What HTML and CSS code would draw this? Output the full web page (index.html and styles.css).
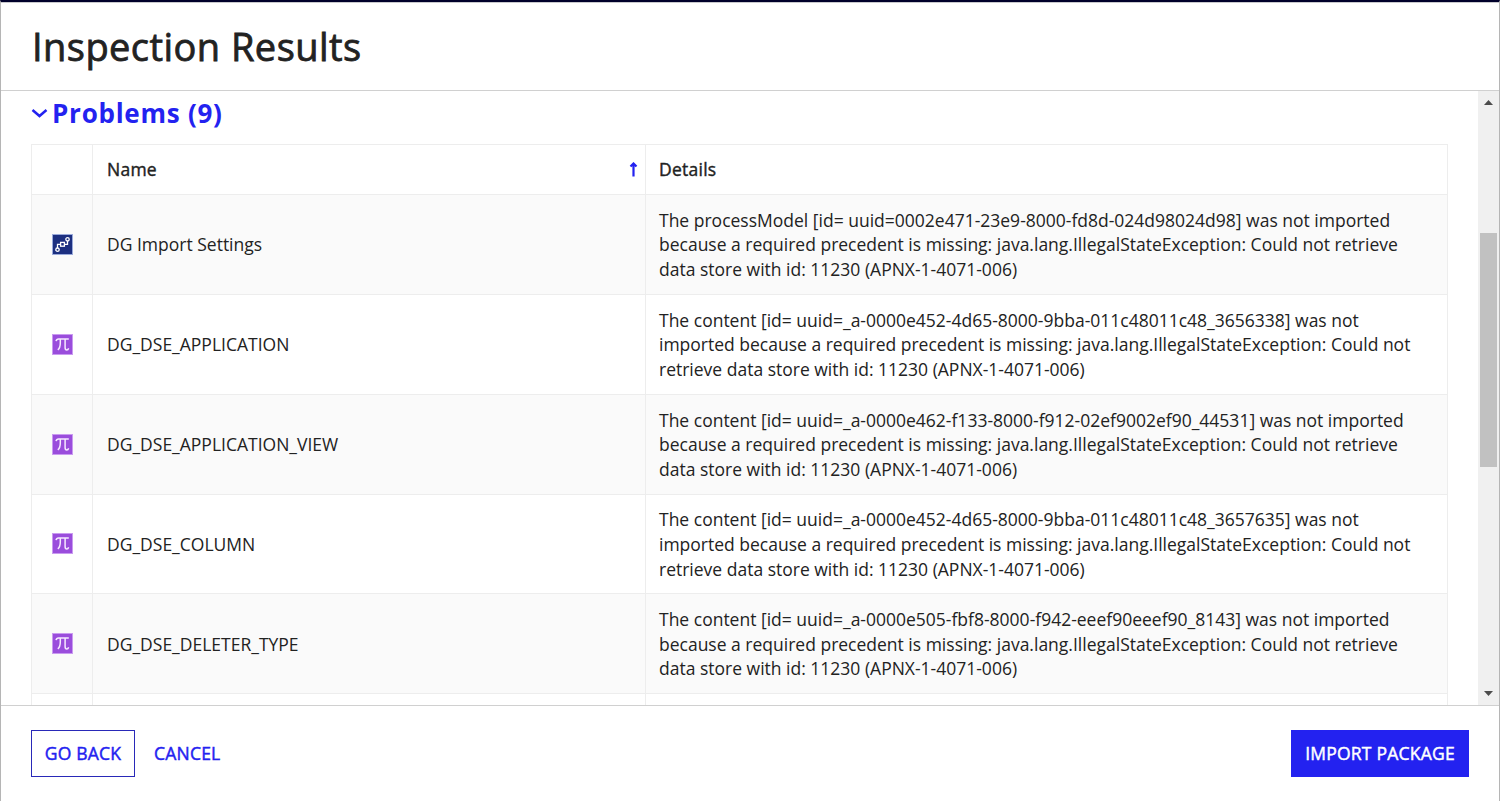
FILE: index.html
```html
<!DOCTYPE html>
<html lang="en">
<head>
    <meta charset="UTF-8">
    <meta name="viewport" content="width=device-width, initial-scale=1.0">
    <title>Inspection Results</title>
    <link rel="stylesheet" href="styles.css">
</head>
<body>

    <svg class="sprite" width="0" height="0">
        <symbol id="icon-rule" viewBox="0 0 21 21">
            <rect x="0.5" y="0.5" width="20" height="20" fill="#9a4ddc" stroke="#c99af0"/>
            <path d="M4 7.2C4.3 5.5 5 4.9 6.6 4.9H16.8M8.3 5V9C8.3 12.500 7.600 14.500 5.800 15.900M13.100 5V13.500C13.100 15.400 13.800 16 14.800 16C15.800 16 16.300 15.400 16.600 14.200" fill="none" stroke="#f6e9ff" stroke-width="1.5"/>
        </symbol>
        <symbol id="icon-process" viewBox="0 0 21 21">
            <rect x="0.5" y="0.5" width="20" height="20" fill="#1c2f80" stroke="#9aaada"/>
            <g fill="none" stroke="#fff" stroke-width="1.3">
                <circle cx="5.500" cy="15.700" r="1.700"/>
                <circle cx="15.500" cy="5.300" r="1.700"/>
                <rect x="8.600" y="8.400" width="3.800" height="3.800"/>
                <path d="M5.500 14V10.300H8.600M12.400 10.300H15.500V7"/>
            </g>
        </symbol>
    </svg>

    <div class="dialog">
        <header class="dialog-header">
            <h1>Inspection Results</h1>
        </header>

        <div class="dialog-body">
            <main class="content">
                <h2>
                    <svg class="chevron" width="17" height="10" viewBox="0 0 17 10"><path d="M1.500 2L8.500 8L15.500 2" fill="none" stroke="#2322f0" stroke-width="2.500"/></svg>
                    <span>Problems (9)</span>
                </h2>
                <table>
                    <colgroup>
                        <col class="col-icon">
                        <col class="col-name">
                        <col class="col-details">
                    </colgroup>
                    <thead>
                        <tr>
                            <th></th>
                            <th>
                                <div class="sorted">Name
                                    <svg width="9" height="16" viewBox="0 0 9 16"><path d="M4.500 14.500V2M1.500 4.500L4.500 1.500L7.500 4.500" fill="none" stroke="#2322f0" stroke-width="2.200"/></svg>
                                </div>
                            </th>
                            <th>Details</th>
                        </tr>
                    </thead>
                    <tbody>
                        <tr>
                            <td class="icon"><svg width="21" height="21"><use href="#icon-process"/></svg></td>
                            <td>DG Import Settings</td>
                            <td>The processModel [id= uuid=0002e471-23e9-8000-fd8d-024d98024d98] was not imported<br>because a required precedent is missing: java.lang.IllegalStateException: Could not retrieve<br>data store with id: 11230 (APNX-1-4071-006)</td>
                        </tr>
                        <tr>
                            <td class="icon"><svg width="21" height="21"><use href="#icon-rule"/></svg></td>
                            <td>DG_DSE_APPLICATION</td>
                            <td>The content [id= uuid=_a-0000e452-4d65-8000-9bba-011c48011c48_3656338] was not<br>imported because a required precedent is missing: java.lang.IllegalStateException: Could not<br>retrieve data store with id: 11230 (APNX-1-4071-006)</td>
                        </tr>
                        <tr>
                            <td class="icon"><svg width="21" height="21"><use href="#icon-rule"/></svg></td>
                            <td>DG_DSE_APPLICATION_VIEW</td>
                            <td>The content [id= uuid=_a-0000e462-f133-8000-f912-02ef9002ef90_44531] was not imported<br>because a required precedent is missing: java.lang.IllegalStateException: Could not retrieve<br>data store with id: 11230 (APNX-1-4071-006)</td>
                        </tr>
                        <tr>
                            <td class="icon"><svg width="21" height="21"><use href="#icon-rule"/></svg></td>
                            <td>DG_DSE_COLUMN</td>
                            <td>The content [id= uuid=_a-0000e452-4d65-8000-9bba-011c48011c48_3657635] was not<br>imported because a required precedent is missing: java.lang.IllegalStateException: Could not<br>retrieve data store with id: 11230 (APNX-1-4071-006)</td>
                        </tr>
                        <tr>
                            <td class="icon"><svg width="21" height="21"><use href="#icon-rule"/></svg></td>
                            <td>DG_DSE_DELETER_TYPE</td>
                            <td>The content [id= uuid=_a-0000e505-fbf8-8000-f942-eeef90eeef90_8143] was not imported<br>because a required precedent is missing: java.lang.IllegalStateException: Could not retrieve<br>data store with id: 11230 (APNX-1-4071-006)</td>
                        </tr>
                        <tr>
                            <td></td>
                            <td></td>
                            <td></td>
                        </tr>
                    </tbody>
                </table>
            </main>
            <div class="scrollbar">
                <svg width="9" height="5" viewBox="0 0 9 5"><path d="M0 5L4.500 0L9 5Z" fill="#4c4c4c"/></svg>
                <div class="thumb"></div>
                <svg width="9" height="5" viewBox="0 0 9 5"><path d="M0 0L4.500 5L9 0Z" fill="#4c4c4c"/></svg>
            </div>
        </div>

        <footer class="dialog-footer">
            <button class="outline">GO BACK</button>
            <button class="link">CANCEL</button>
            <button class="primary">IMPORT PACKAGE</button>
        </footer>
    </div>

</body>
</html>
```
FILE: styles.css
```css
* {
    box-sizing: border-box;
}
body {
    margin: 0;
    font-family: "Open Sans", sans-serif;
    font-size: 17.5px;
    color: #222;
    background-color: #fff;
}
.sprite {
    display: none;
}
.dialog {
    display: flex;
    flex-direction: column;
    height: 801px;
    border-top: 2px solid #00002b;
    border-left: 1px solid #b5b5b5;
    border-right: 1px solid #b5b5b5;
    overflow: hidden;
}
.dialog-header {
    display: flex;
    align-items: center;
    height: 89px;
    padding: 0 31px 2px;
    border-top: 1px solid #c9c9cd;
    border-bottom: 1px solid #d0d0d0;
}
/* medium weight: regular glyphs thickened with a thin stroke */
h1 {
    margin: 0;
    font-size: 38px;
    font-weight: 400;
    letter-spacing: 0.45px;
    line-height: 52px;
    -webkit-text-stroke: 0.8px #222;
}
.dialog-body {
    display: flex;
    height: 614px;
    overflow: hidden;
}
.content {
    flex: 1;
    padding: 0 30px;
}
h2 {
    display: flex;
    align-items: center;
    gap: 4px;
    height: 44px;
    margin: 0 0 9px;
    color: #2322f0;
    font-size: 26px;
    font-weight: 700;
    letter-spacing: 0.75px;
}
table {
    width: 1417px;
    table-layout: fixed;
    border-collapse: separate;
    border-spacing: 0;
    border-top: 1px solid #ededed;
    border-left: 1px solid #ededed;
}
.col-icon {
    width: 61px;
}
.col-name {
    width: 553px;
}
th,
td {
    padding: 0 13px;
    border-right: 1px solid #ededed;
    border-bottom: 1px solid #ededed;
    text-align: left;
    white-space: nowrap;
    line-height: 24.6px;
}
th {
    height: 50px;
    font-weight: 400;
    letter-spacing: 0.25px;
    -webkit-text-stroke: 0.4px #222;
}
td {
    height: 99.85px;
    padding-top: 0.6px;
}
th:nth-child(2),
td:nth-child(2) {
    padding-left: 14px;
}
tbody tr:nth-child(odd) {
    background-color: #fafafa;
}
td.icon {
    padding: 0 20px;
}
.icon svg {
    display: block;
}
.sorted {
    display: flex;
    justify-content: space-between;
    align-items: center;
    margin-right: -6px;
}
.scrollbar {
    display: flex;
    flex-direction: column;
    align-items: center;
    width: 21px;
    padding: 9px 1px 9px 0;
    background-color: #f0f0f0;
}
.thumb {
    width: 17px;
    height: 234px;
    margin: 128px 0 auto;
    background-color: #c1c1c1;
}
.dialog-footer {
    display: flex;
    align-items: center;
    height: 96px;
    padding: 0 30px;
    border-top: 1px solid #d0d0d0;
}
button {
    height: 47px;
    padding: 0 0 2px;
    border: none;
    background: none;
    font-family: inherit;
    font-size: 17.5px;
    font-weight: 400;
    letter-spacing: 0.22px;
    color: #2322f0;
    -webkit-text-stroke: 0.45px currentColor;
    cursor: pointer;
}
button.outline {
    width: 104px;
    border: 1px solid #2929b8;
}
button.link {
    margin-left: 19px;
}
button.primary {
    width: 178px;
    margin-left: auto;
    background-color: #2322f0;
    color: #fff;
}
```
